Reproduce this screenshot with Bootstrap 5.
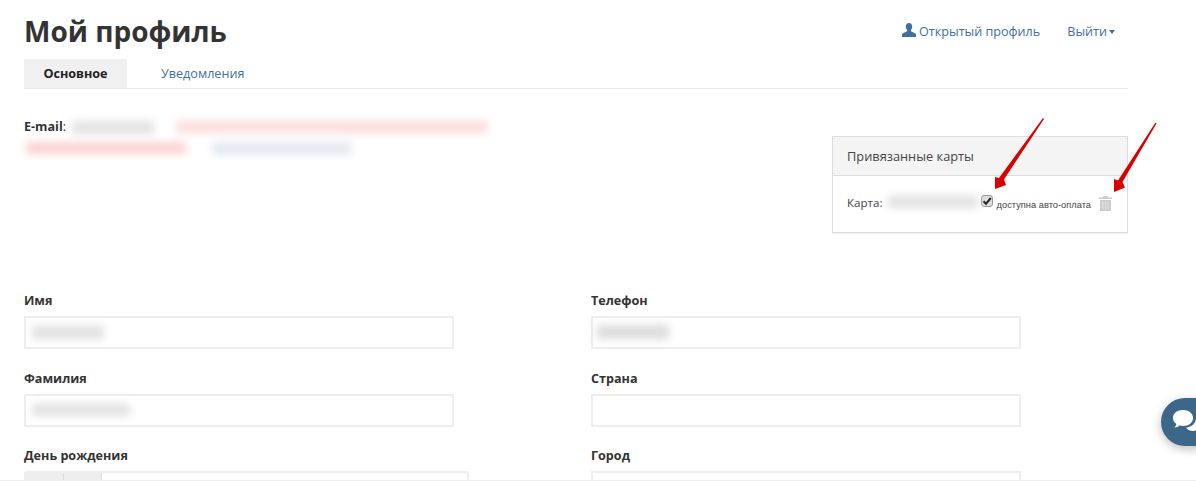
<!DOCTYPE html>
<html lang="ru">
<head>
<meta charset="utf-8">
<title>Мой профиль</title>
<link href="https://cdn.jsdelivr.net/npm/bootstrap@5.3.0/dist/css/bootstrap.min.css" rel="stylesheet">
<style>
html,body{height:481px;overflow:hidden;background:#fff}
body{font-family:"Open Sans","Liberation Sans",sans-serif;font-size:12.6px;color:#333}
.page-wrap{width:1104px;margin-left:24px;position:relative}
.top-bar{height:59px;padding-top:12px}
.page-title{font-size:28px;font-weight:700;line-height:38px;margin:0;color:#333}
.top-links{gap:27px;padding-top:11px;padding-right:13px}
.top-links a{color:#3f6f9f;text-decoration:none;font-size:12.6px;line-height:18px}
.caret-mark{display:inline-block;border-top:4px solid #3f6f9f;border-left:3.500px solid transparent;border-right:3.500px solid transparent;vertical-align:2px;margin-left:2px}
.tab-row{border-bottom:1px solid #e9e9e9;height:30px}
.tab-item{height:29px;line-height:29px;font-size:12.6px;text-decoration:none}
.tab-on{width:103px;background:#f0f0f0;color:#222;font-weight:700;text-align:center}
.tab-off{color:#3f6f9f;margin-left:34px}
.info-zone{height:203px;padding-top:28px}
.mail-text{font-size:12.6px;line-height:20px;width:470px;position:relative;height:44px}
.blur-bit{position:absolute;filter:blur(4px);border-radius:2px}
.cards-box{width:296px;margin-top:19px;border:1px solid #ddd;box-shadow:0 1px 1px rgba(0,0,0,.05);height:97px;border-radius:0}
.cards-head{height:39px;background:#f4f4f4;border-bottom:1px solid #ddd;padding:0 14px;line-height:38px;font-size:12.8px;color:#444}
.cards-body{padding:18px 14px 0;font-size:11.6px;color:#444;line-height:18px}
.card-blur{width:98px;height:18px;position:relative;flex:none}
.auto-label{font-family:"Liberation Sans",sans-serif;font-size:9.3px;color:#444;margin-left:4px;margin-top:1px;white-space:nowrap;flex:none;line-height:20px}
.mini-check{width:12px;height:12px;margin:1px 0 0 0;flex:none;background:#ddd;border:1px solid #999;border-radius:3px;display:flex;align-items:center;justify-content:center}
.trash-mark{flex:none;margin-left:8px;margin-top:2px}
.form-cols{display:flex;gap:137px}
.form-col{width:430px}
.field-label{font-size:12.6px;font-weight:700;color:#333;line-height:18px;margin-bottom:6px}
.field-input{height:33px;border:2px solid #eee;position:relative;margin-bottom:20px;background:#fff}
.field-row{height:77.5px}
.date-line{display:flex;width:445px;height:33px;border:2px solid #eee;border-radius:3px}
.date-btn{width:38px;background:#eee;border-right:1px solid #ddd;font-size:13px;text-align:center;line-height:24px;color:#333}
.foot-line{position:fixed;left:0;right:0;bottom:0;height:1px;background:#eee}
.chat-fab{position:fixed;left:1161px;top:398px;width:58px;height:48px;border-radius:24px;background:#3c6788;box-shadow:0 3px 10px rgba(0,0,0,.25)}
.arrow-layer{position:absolute;left:0;top:0;pointer-events:none}
</style>
</head>
<body>
<div class="page-wrap">
  <div class="top-bar d-flex justify-content-between align-items-start">
    <h1 class="page-title">Мой профиль</h1>
    <div class="top-links d-flex">
      <a href="#"><svg width="14" height="14" viewBox="0 0 14 14" style="vertical-align:-1px"><path fill="#3f6f9f" d="M7 0C4.900 0 3.800 1.600 3.800 3.600c0 1.400.5 2.600 1.300 3.400v1.300L.6 10.500C.2 10.700 0 11.100 0 11.500V14h14v-2.500c0-.4-.2-.8-.6-1L8.900 8.300V7c.8-.8 1.300-2 1.300-3.400C10.200 1.600 9.100 0 7 0z"/></svg> Открытый профиль</a>
      <a href="#">Выйти<span class="caret-mark"></span></a>
    </div>
  </div>
  <div class="tab-row d-flex">
    <a class="tab-item tab-on" href="#">Основное</a>
    <a class="tab-item tab-off" href="#">Уведомления</a>
  </div>
  <div class="info-zone d-flex justify-content-between align-items-start">
    <div class="mail-text">
      <b>E-mail</b>:
      <span class="blur-bit" style="left:48px;top:4px;width:82px;height:13px;background:#e2e2e2"></span>
      <span class="blur-bit" style="left:152px;top:4px;width:312px;height:12px;background:#fcdcdc"></span>
      <span class="blur-bit" style="left:2px;top:25px;width:160px;height:12px;background:#fcd0d0"></span>
      <span class="blur-bit" style="left:188px;top:25px;width:140px;height:13px;background:#e3e9f2"></span>
    </div>
    <div class="cards-box">
      <div class="cards-head">Привязанные карты</div>
      <div class="cards-body d-flex align-items-start">
        <span>Карта:</span>
        <span class="card-blur"><span class="blur-bit" style="left:5px;top:2px;width:90px;height:12px;background:#e0e0e0"></span></span>
        <span class="mini-check"><svg width="10" height="10" viewBox="0 0 10 10"><path d="M1.500 5.200 4 7.800 8.800 2" fill="none" stroke="#222" stroke-width="2"/></svg></span>
        <span class="auto-label">доступна авто-оплата</span>
        <svg class="trash-mark" width="13" height="15" viewBox="0 0 13 15"><path fill="#ccc" d="M4.500 0h4l.7 1.500H13V3H0V1.500h3.800zM1 4h11v11H1z"/><path stroke="#e4e4e4" stroke-width="1" d="M3.800 5.500v8M6.500 5.500v8M9.200 5.500v8"/></svg>
      </div>
    </div>
  </div>
  <div class="form-cols">
    <div class="form-col">
      <div class="field-row"><div class="field-label">Имя</div><div class="field-input"><span class="blur-bit" style="left:6px;top:8px;width:72px;height:13px;background:#e0e0e0"></span></div></div>
      <div class="field-row"><div class="field-label">Фамилия</div><div class="field-input"><span class="blur-bit" style="left:6px;top:8px;width:98px;height:12px;background:#e0e0e0"></span></div></div>
      <div class="field-row"><div class="field-label">День рождения</div><div class="date-line"><div class="date-btn">М</div><div class="date-btn">Г</div></div></div>
    </div>
    <div class="form-col">
      <div class="field-row"><div class="field-label">Телефон</div><div class="field-input"><span class="blur-bit" style="left:4px;top:7px;width:72px;height:14px;background:#dcdcdc"></span></div></div>
      <div class="field-row"><div class="field-label">Страна</div><div class="field-input"></div></div>
      <div class="field-row"><div class="field-label">Город</div><div class="field-input"></div></div>
    </div>
  </div>
  <svg class="arrow-layer" width="1172" height="240" viewBox="0 0 1172 240">
    <g fill="#d80000">
      <path d="M1019 118 1020 119 980 179.500 982 185 971 189 971 177 975 178z"/>
      <path d="M1131.500 122.500 1132.500 123.500 1098.500 182 1101 187.500 1090 192 1090 179 1094 180.500z"/>
    </g>
  </svg>
</div>
<div class="foot-line"></div>
<div class="chat-fab">
  <svg width="40" height="30" viewBox="0 0 40 30" style="position:absolute;left:11px;top:11px"><path fill="#fff" d="M11 1C5 1 1 4.500 1 9c0 2.500 1.300 4.600 3.400 6-.3 1.300-1 2.500-1.900 3.500 2 0 3.900-1 5-2 1.100.3 2.300.5 3.500.5 6 0 10-3.500 10-8s-4-8-10-8z"/><path fill="#fff" d="M24 9c0 5-4 9-10 9.700 1.500 2 4.200 3.300 7 3.300 1 0 2-.2 3-.4 1 .9 2.700 1.800 4.500 1.800-.8-.9-1.400-2-1.700-3.100C28.500 19 30 17 30 15c0-3-2.500-5-6-6z"/></svg>
</div>
</body>
</html>
